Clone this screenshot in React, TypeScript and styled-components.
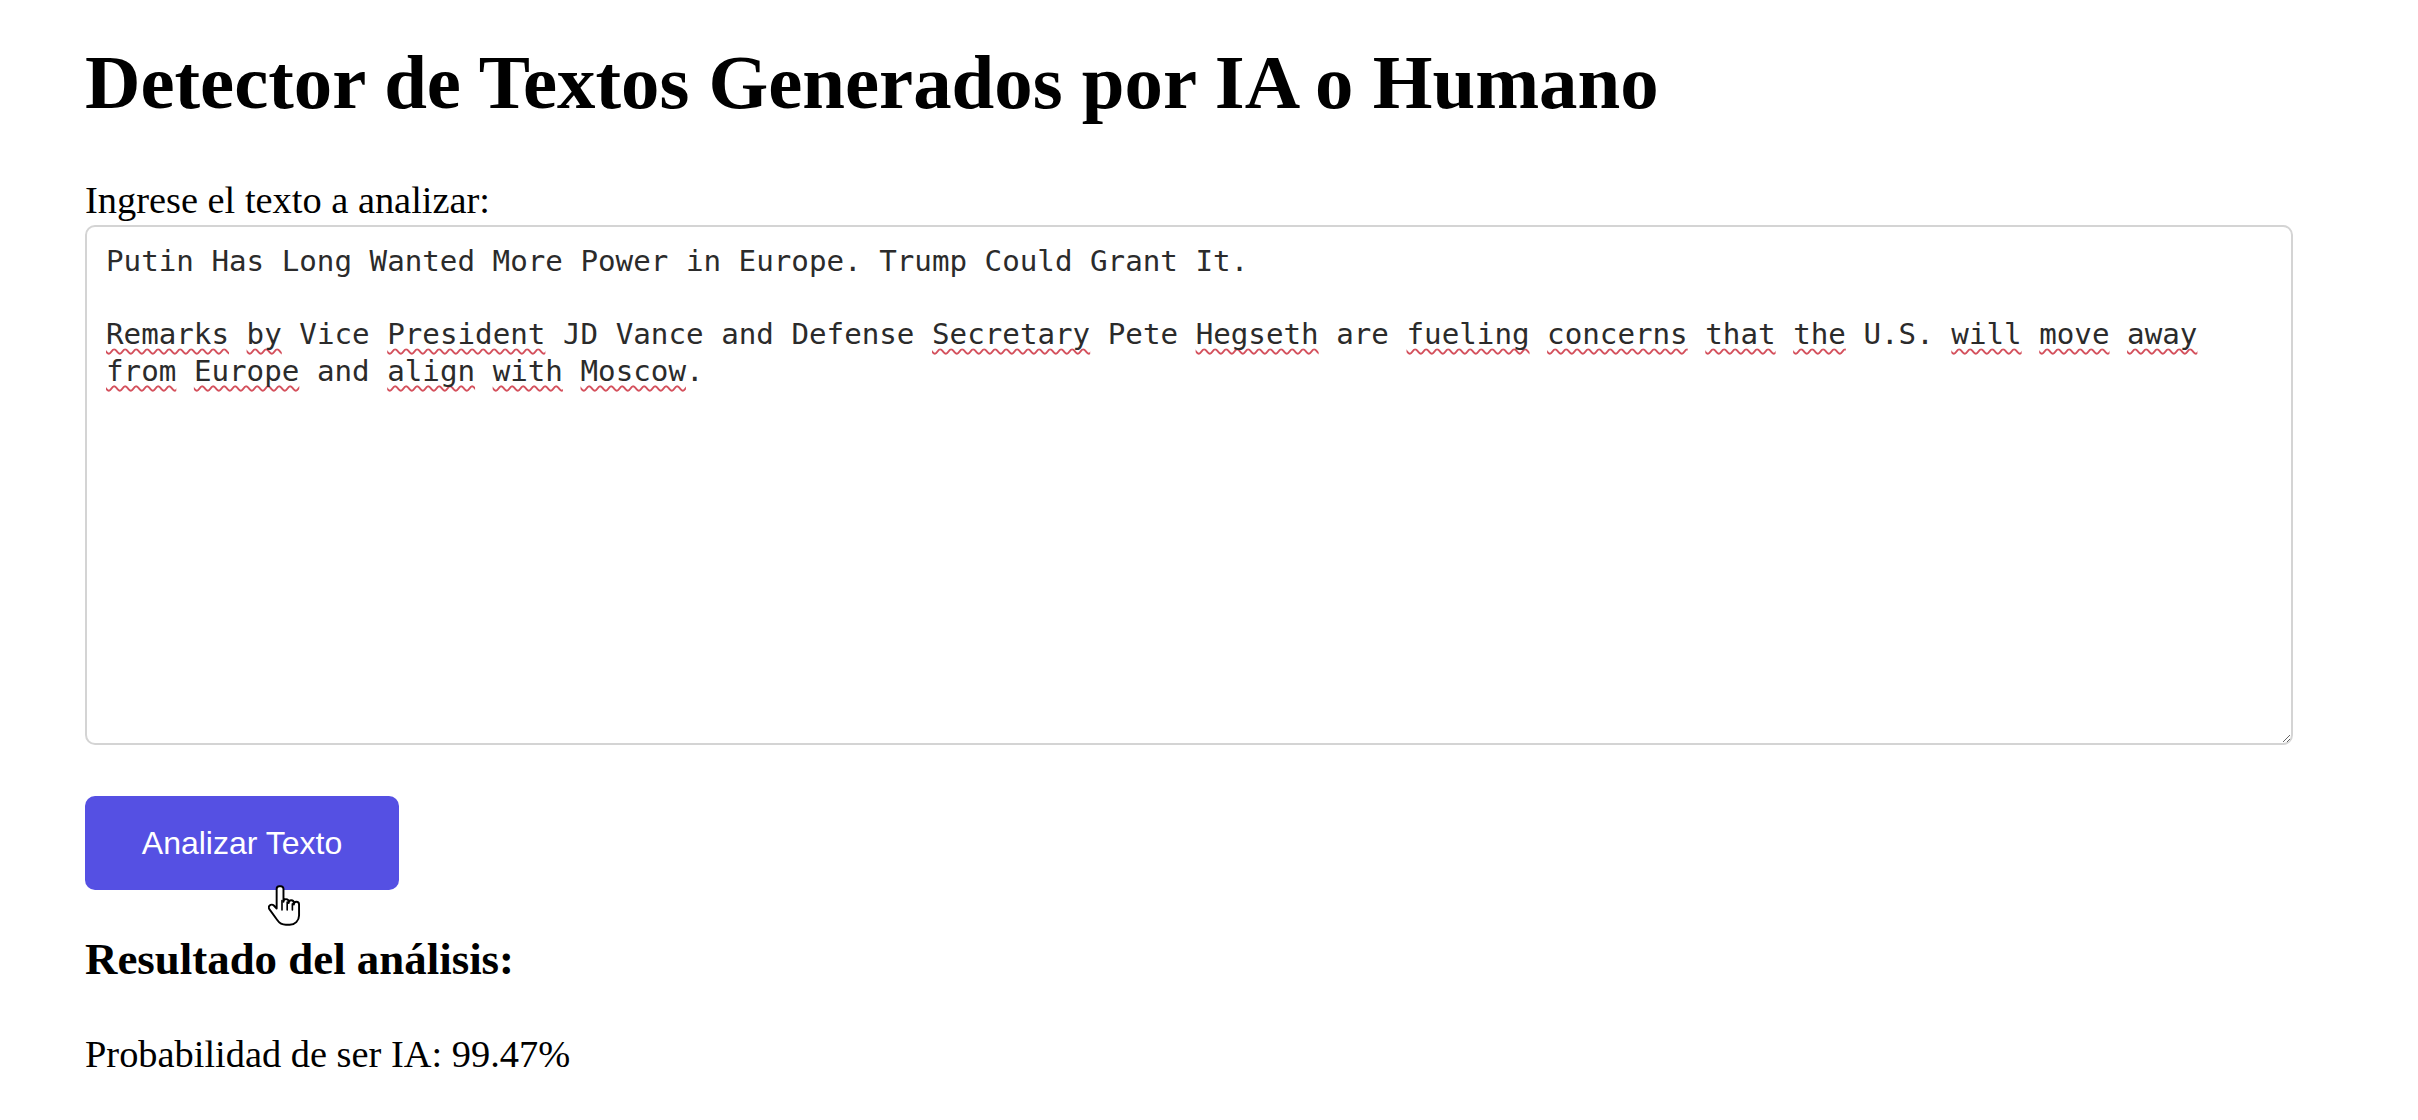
import * as React from 'react';
import styled, { createGlobalStyle } from 'styled-components';

const GlobalStyle = createGlobalStyle`
    html, body {
        margin: 0;
        padding: 0;
        background: #ffffff;
    }
    body {
        font-family: 'Liberation Serif', 'Times New Roman', serif;
        color: #000000;
    }
`;

type Word = { text: string; flagged?: boolean };

const splitLine = (line: string, flagged: string[]): Word[] =>
    line.split(' ').map((w) => ({ text: w, flagged: flagged.includes(w.replace(/\.$/, '')) }));

const flaggedWords = [
    'Remarks',
    'by',
    'President',
    'Secretary',
    'Hegseth',
    'fueling',
    'concerns',
    'that',
    'the',
    'will',
    'move',
    'away',
    'from',
    'Europe',
    'align',
    'with',
    'Moscow',
];

const headline = 'Putin Has Long Wanted More Power in Europe. Trump Could Grant It.';
const body =
    'Remarks by Vice President JD Vance and Defense Secretary Pete Hegseth are fueling concerns that the U.S. will move away from Europe and align with Moscow.';

export default function App() {
    const words = splitLine(body, flaggedWords);
    return (
        <>
            <GlobalStyle />
            <Page>
                <Title>Detector de Textos Generados por IA o Humano</Title>
                <Label htmlFor="texto">Ingrese el texto a analizar:</Label>
                <TextBox id="texto" role="textbox" aria-multiline="true" contentEditable suppressContentEditableWarning spellCheck={false}>
                    <Line>{headline}</Line>
                    <Line>{'\u00a0'}</Line>
                    <Line>
                        {words.map((w, i) => (
                            <React.Fragment key={i}>
                                {w.flagged ? <Misspelled>{w.text.replace(/\.$/, '')}</Misspelled> : w.text}
                                {w.flagged && w.text.endsWith('.') ? '.' : ''}
                                {i < words.length - 1 ? ' ' : ''}
                            </React.Fragment>
                        ))}
                    </Line>
                </TextBox>
                <ButtonWrap>
                    <AnalyzeButton type="button">Analizar Texto</AnalyzeButton>
                    <Cursor width="36" height="46" viewBox="0 0 24 31" aria-hidden="true">
                        <path
                            d="M7.5 1.5c-1 0-1.8.8-1.8 1.8v13.2l-1.9-2c-.8-.8-2-.8-2.8 0-.7.7-.7 1.8-.1 2.6l5.2 7.2c1.3 1.9 3.3 3.2 5.8 3.2h2.6c3.5 0 6.3-2.8 6.3-6.3v-7.4c0-1-.8-1.8-1.8-1.8s-1.7.8-1.7 1.8v-1c0-1-.8-1.8-1.8-1.8s-1.7.8-1.7 1.8v-.8c0-1-.8-1.8-1.8-1.8s-1.7.8-1.7 1.8V3.3c0-1-.8-1.8-1.8-1.8z"
                            fill="#ffffff"
                            stroke="#000000"
                            strokeWidth="1.3"
                            strokeLinejoin="round"
                        />
                        <path d="M9.3 11.2v6.3M12.8 12.2v5.3M16.3 13.4v4.1" stroke="#000000" strokeWidth="1.1" strokeLinecap="round" />
                    </Cursor>
                </ButtonWrap>
                <ResultTitle>Resultado del análisis:</ResultTitle>
                <ResultText>Probabilidad de ser IA: 99.47%</ResultText>
            </Page>
        </>
    );
}

const Page = styled.main`
    display: flex;
    flex-direction: column;
    align-items: flex-start;
    padding: 39px 125px 0 85px;
`;

const Title = styled.h1`
    font-family: 'Liberation Serif', 'Times New Roman', serif;
    font-size: 76.8px;
    font-weight: bold;
    line-height: 88px;
    margin: 0 0 51px 0;
`;

const Label = styled.label`
    display: block;
    font-size: 38.4px;
    line-height: 44px;
    margin-bottom: 3px;
`;

const TextBox = styled.div`
    box-sizing: border-box;
    width: 100%;
    height: 520px;
    padding: 16px 40px 19px 19px;
    border: 2px solid #d4d4d4;
    border-radius: 10px;
    font-family: 'DejaVu Sans Mono', 'Liberation Mono', monospace;
    font-size: 29.2px;
    line-height: 36.7px;
    color: #2b2b2b;
    overflow: auto;
    resize: vertical;
    outline: none;
    white-space: pre-wrap;
`;

const Line = styled.div`
    min-height: 36.7px;
`;

const Misspelled = styled.span`
    text-decoration: underline wavy #d4505c;
    text-decoration-thickness: 1.5px;
    text-underline-offset: 4px;
    text-decoration-skip-ink: none;
`;

const ButtonWrap = styled.div`
    position: relative;
    margin-top: 51px;
`;

const AnalyzeButton = styled.button`
    display: block;
    box-sizing: border-box;
    width: 314px;
    height: 94px;
    padding: 0 24px;
    border: none;
    border-radius: 10px;
    background: #5550e3;
    color: #ffffff;
    font-family: 'Liberation Sans', Arial, sans-serif;
    font-size: 32px;
    cursor: pointer;
`;

const Cursor = styled.svg`
    position: absolute;
    left: 183px;
    top: 88px;
`;

const ResultTitle = styled.h3`
    font-family: 'Liberation Serif', 'Times New Roman', serif;
    font-size: 44.9px;
    line-height: 51.6px;
    font-weight: bold;
    margin: 44px 0 0 0;
`;

const ResultText = styled.p`
    font-size: 38.4px;
    line-height: 44px;
    margin: 46px 0 0 0;
`;
